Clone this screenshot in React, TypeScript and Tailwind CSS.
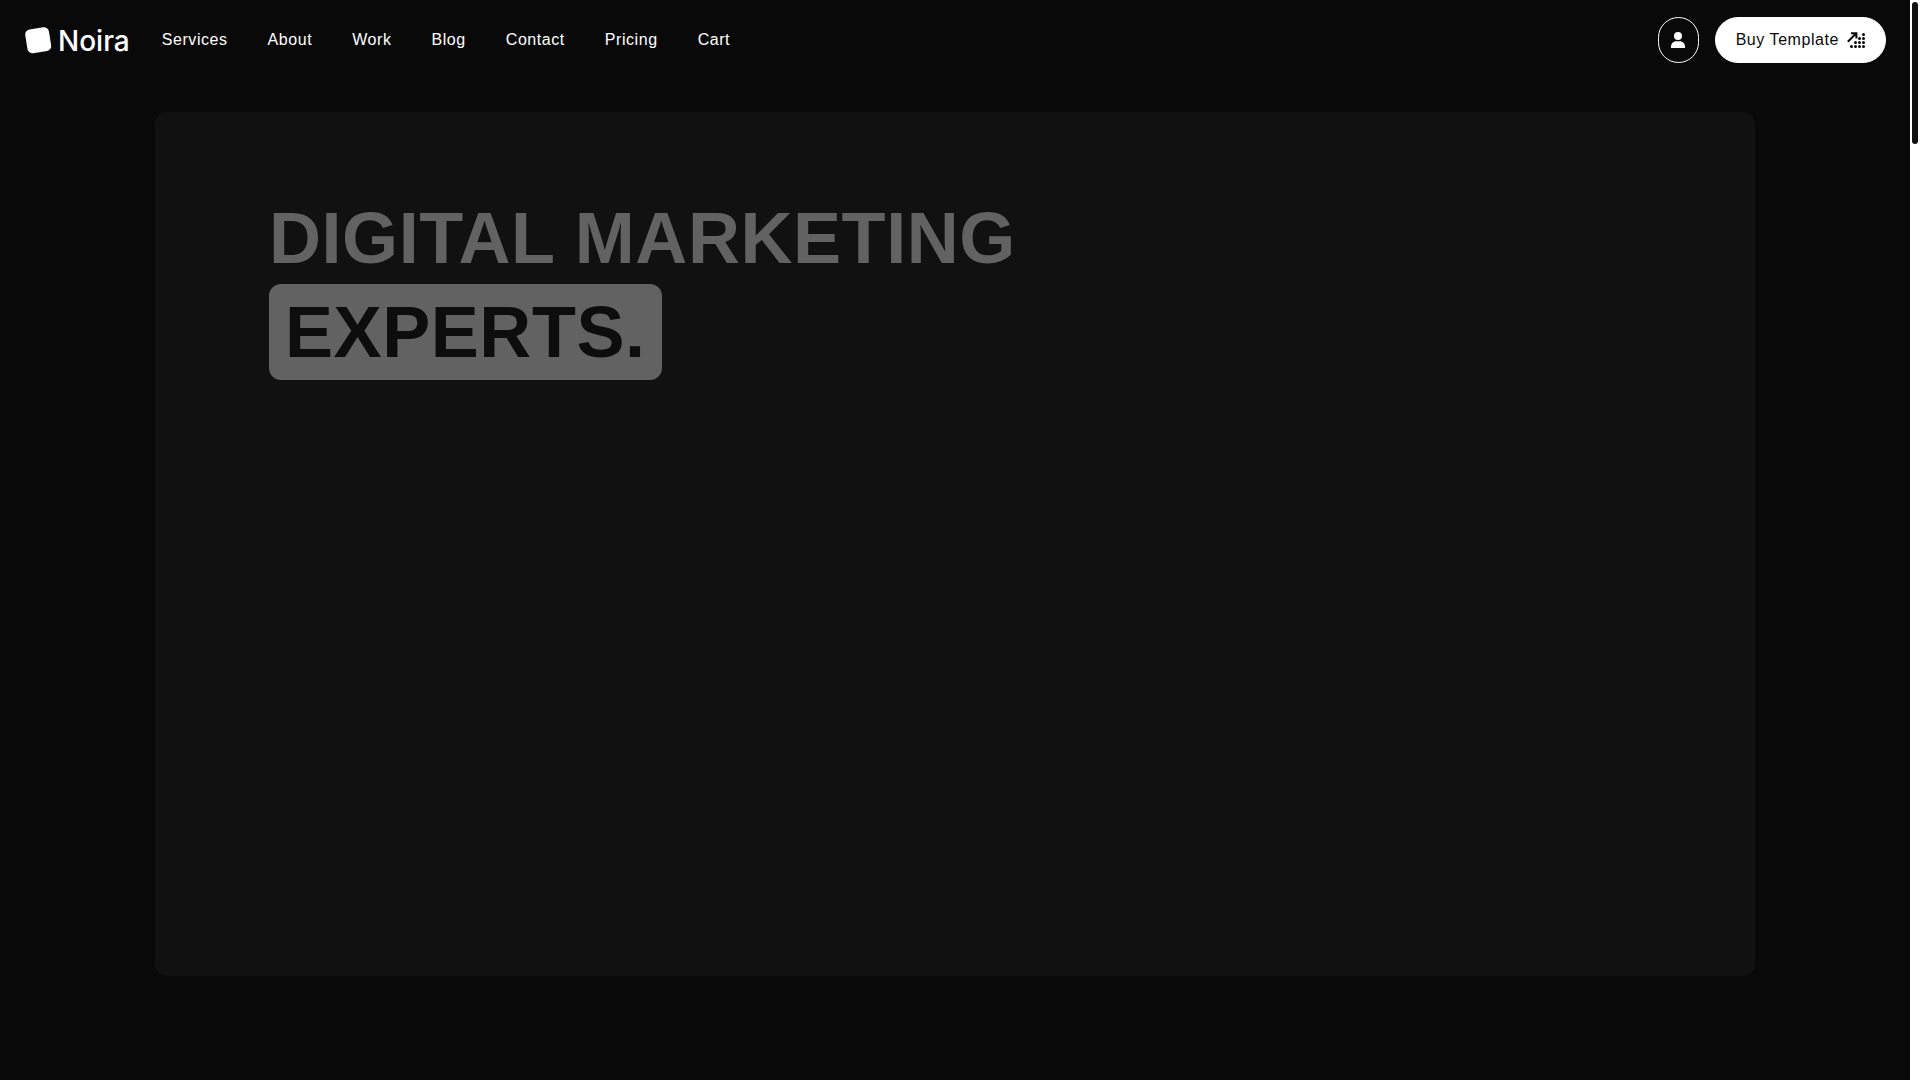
const links = ['Services', 'About', 'Work', 'Blog', 'Contact', 'Pricing', 'Cart'];

const dots = [
  [16.5, 2.5],
  [12.5, 6.5], [16.5, 6.5],
  [8.5, 10.5], [12.5, 10.5], [16.5, 10.5],
  [4.5, 14.5], [8.5, 14.5], [12.5, 14.5], [16.5, 14.5],
];

function Logo() {
  return (
    <a href="#home" className="flex items-center gap-1.5 text-white">
      <svg viewBox="0 0 28 28" className="size-7" fill="currentColor" aria-hidden="true">
        <rect x="2.2" y="2.2" width="24" height="24" rx="5" transform="rotate(-9 14.2 14.2)" />
      </svg>
      <span className="pt-0.5 font-['Inter'] text-[28px] leading-8 font-medium tracking-normal">Noira</span>
    </a>
  );
}

function ArrowDots() {
  return (
    <svg viewBox="0 0 18 16" className="h-4 w-[18px]" aria-hidden="true">
      <path d="M0.8 9.8 L8.8 1.8 M4 1.2 H9.4 V6.6" fill="none" stroke="currentColor" strokeWidth="2" />
      {dots.map(([x, y]) => (
        <circle key={`${x}-${y}`} cx={x} cy={y} r="1.5" fill="currentColor" />
      ))}
    </svg>
  );
}

function Header() {
  return (
    <header className="flex h-20 items-center gap-8 px-6">
      <Logo />
      <nav className="flex items-center gap-10 text-base text-white">
        {links.map((l) => (
          <a key={l} href={`#${l.toLowerCase()}`}>{l}</a>
        ))}
      </nav>
      <div className="ml-auto flex items-center gap-4">
        <button aria-label="Account" className="flex h-[46px] w-[41px] items-center justify-center rounded-full border border-white text-white">
          <svg viewBox="0 0 14 16" className="h-4 w-3.5" fill="currentColor" aria-hidden="true">
            <circle cx="7" cy="4" r="4" />
            <path d="M0 16 V14.5 C0 11.5 2.4 9.2 5.2 9.2 H8.8 C11.6 9.2 14 11.5 14 14.5 V16 Z" />
          </svg>
        </button>
        <a href="#buy" className="flex h-[46px] items-center gap-2 rounded-full border border-white bg-white px-5 text-base text-[#0a0a0a]">
          Buy Template
          <ArrowDots />
        </a>
      </div>
    </header>
  );
}

export default function App() {
  return (
    <div className="flex h-screen overflow-hidden bg-[#090909] font-['Liberation_Sans',Arial,sans-serif] tracking-[0.035em]">
      <div className="min-w-0 flex-1">
        <Header />
        <main className="mx-auto mt-8 h-[80vh] w-full max-w-[1600px] rounded-xl bg-[#111111] px-[114px] py-[86px]">
          <h1 className="text-7xl leading-20 font-bold text-[#626262]">
            <span className="block">DIGITAL MARKETING</span>
            <span className="mt-[6px] block w-fit rounded-xl bg-[#626262] px-4 py-2 text-[#0d0d0d]">EXPERTS.</span>
          </h1>
        </main>
      </div>
      <div className="w-2.5 bg-white px-0.5 pt-0.5" aria-hidden="true">
        <div className="h-[142px] rounded-full bg-[#111111]" />
      </div>
    </div>
  );
}
